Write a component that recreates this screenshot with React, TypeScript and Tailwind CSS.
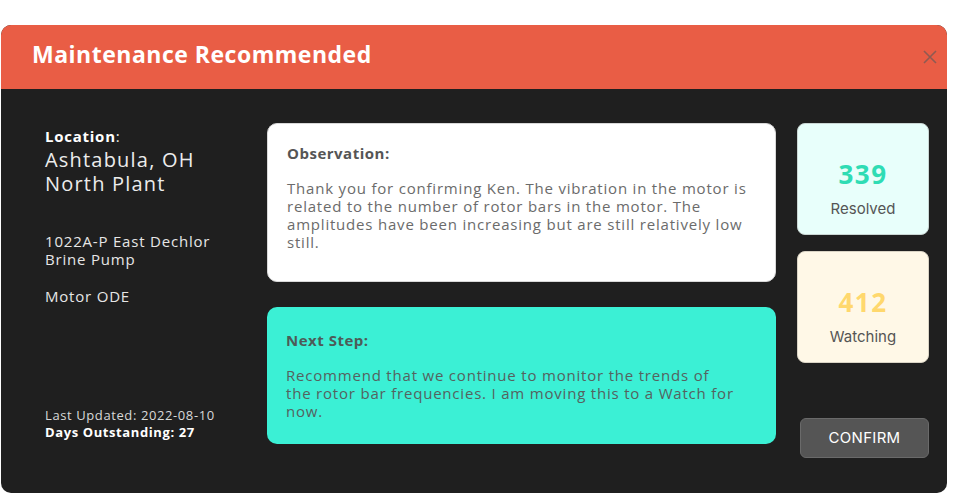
import React from "react";

const font = { fontFamily: '"Open Sans", "Liberation Sans", sans-serif' };

export default function App() {
  return (
    <div className="w-[967px] h-[493px] bg-white overflow-hidden" style={font}>
      <div className="ml-[1px] mt-[25px] w-[946px] h-[468px] rounded-[10px] overflow-hidden bg-[#1f1f1f] flex flex-col">
        <div className="h-[64px] bg-[#e95d45] flex items-center justify-between pl-[31px] pr-[10px] shrink-0">
          <h1 className="text-[23px] font-bold text-white tracking-[0.5px] leading-none mb-[6px]">
            Maintenance Recommended
          </h1>
          <svg width="14" height="14" viewBox="0 0 14 14" className="mb-[1px]">
            <path d="M1 1 L13 13 M13 1 L1 13" stroke="#8f5a52" strokeWidth="1.6" />
          </svg>
        </div>
        <div className="flex flex-1 pl-[44px] pr-[17px] pt-[34px] pb-[35px]">
          <div className="w-[222px] flex flex-col justify-between text-[#e6e6e6]">
            <div>
              <div className="text-[15px] leading-[20px] pt-[3px] tracking-[0.75px]">
                <span className="font-bold text-white">Location</span>:
              </div>
              <div className="mt-[2px] text-[20px] leading-[24px] text-[#ececec] tracking-[1.2px]">Ashtabula, OH</div>
              <div className="text-[20px] leading-[24px] text-[#ececec] tracking-[1.2px]">North Plant</div>
              <div className="mt-[36px] text-[15px] leading-[18px] tracking-[0.8px]">
                1022A-P East Dechlor
                <br />
                Brine Pump
              </div>
              <div className="mt-[19px] text-[15px] leading-[18px] tracking-[0.8px]">Motor ODE</div>
            </div>
            <div className="mb-[17px] text-[13px] leading-[17px] tracking-[0.6px]">
              <div className="text-[#d9d9d9]">Last Updated: 2022-08-10</div>
              <div className="font-bold text-white">Days Outstanding: 27</div>
            </div>
          </div>
          <div className="w-[509px] flex flex-col gap-[25px]">
            <div className="h-[159px] rounded-[10px] bg-white border border-[#d8d8d8] pl-[19px] pr-[14px] pt-[19px]">
              <div className="text-[15px] font-bold text-[#555] leading-[20px] tracking-[0.5px]">Observation:</div>
              <p className="mt-[16px] text-[15px] leading-[18px] text-[#6b6b6b] tracking-[0.8px]">
                Thank you for confirming Ken. The vibration in the motor is related to the number
                of rotor bars in the motor. The amplitudes have been increasing but are still
                relatively low still.
              </p>
            </div>
            <div className="h-[137px] rounded-[10px] bg-[#3bf0d5] pl-[19px] pr-[14px] pt-[23px]">
              <div className="text-[15px] font-bold text-[#4d5b58] leading-[20px] tracking-[0.5px]">Next Step:</div>
              <p className="mt-[16px] text-[15px] leading-[18px] text-[#55625f] tracking-[0.8px]">
                Recommend that we continue to monitor the trends of
                <br />
                the rotor bar frequencies. I am moving this to a Watch for
                <br />
                now.
              </p>
            </div>
          </div>
          <div className="ml-[21px] w-[132px] flex flex-col">
            <div className="h-[112px] rounded-[8px] bg-[#e8fffb] border border-[#c9d6d3] flex flex-col items-center pt-[35px]">
              <div className="text-[26px] font-bold text-[#2fdcb4] leading-[30px] tracking-[1.5px]">339</div>
              <div className="mt-[11px] text-[15px] text-[#555] leading-[18px]" style={{ fontFamily: "Inter, sans-serif" }}>
                Resolved
              </div>
            </div>
            <div className="mt-[16px] h-[112px] rounded-[8px] bg-[#fff8e7] border border-[#d9d3c4] flex flex-col items-center pt-[35px]">
              <div className="text-[26px] font-bold text-[#ffd86d] leading-[30px] tracking-[1.5px]">412</div>
              <div className="mt-[11px] text-[15px] text-[#555] leading-[18px]" style={{ fontFamily: "Inter, sans-serif" }}>
                Watching
              </div>
            </div>
            <div className="flex-1" />
            <button
              className="ml-[3px] w-[129px] h-[40px] rounded-[6px] bg-[#555555] border border-[#6a6a6a] text-white text-[15px] tracking-[0.3px]"
              style={{ fontFamily: "Inter, sans-serif" }}
            >
              CONFIRM
            </button>
          </div>
        </div>
      </div>
    </div>
  );
}
